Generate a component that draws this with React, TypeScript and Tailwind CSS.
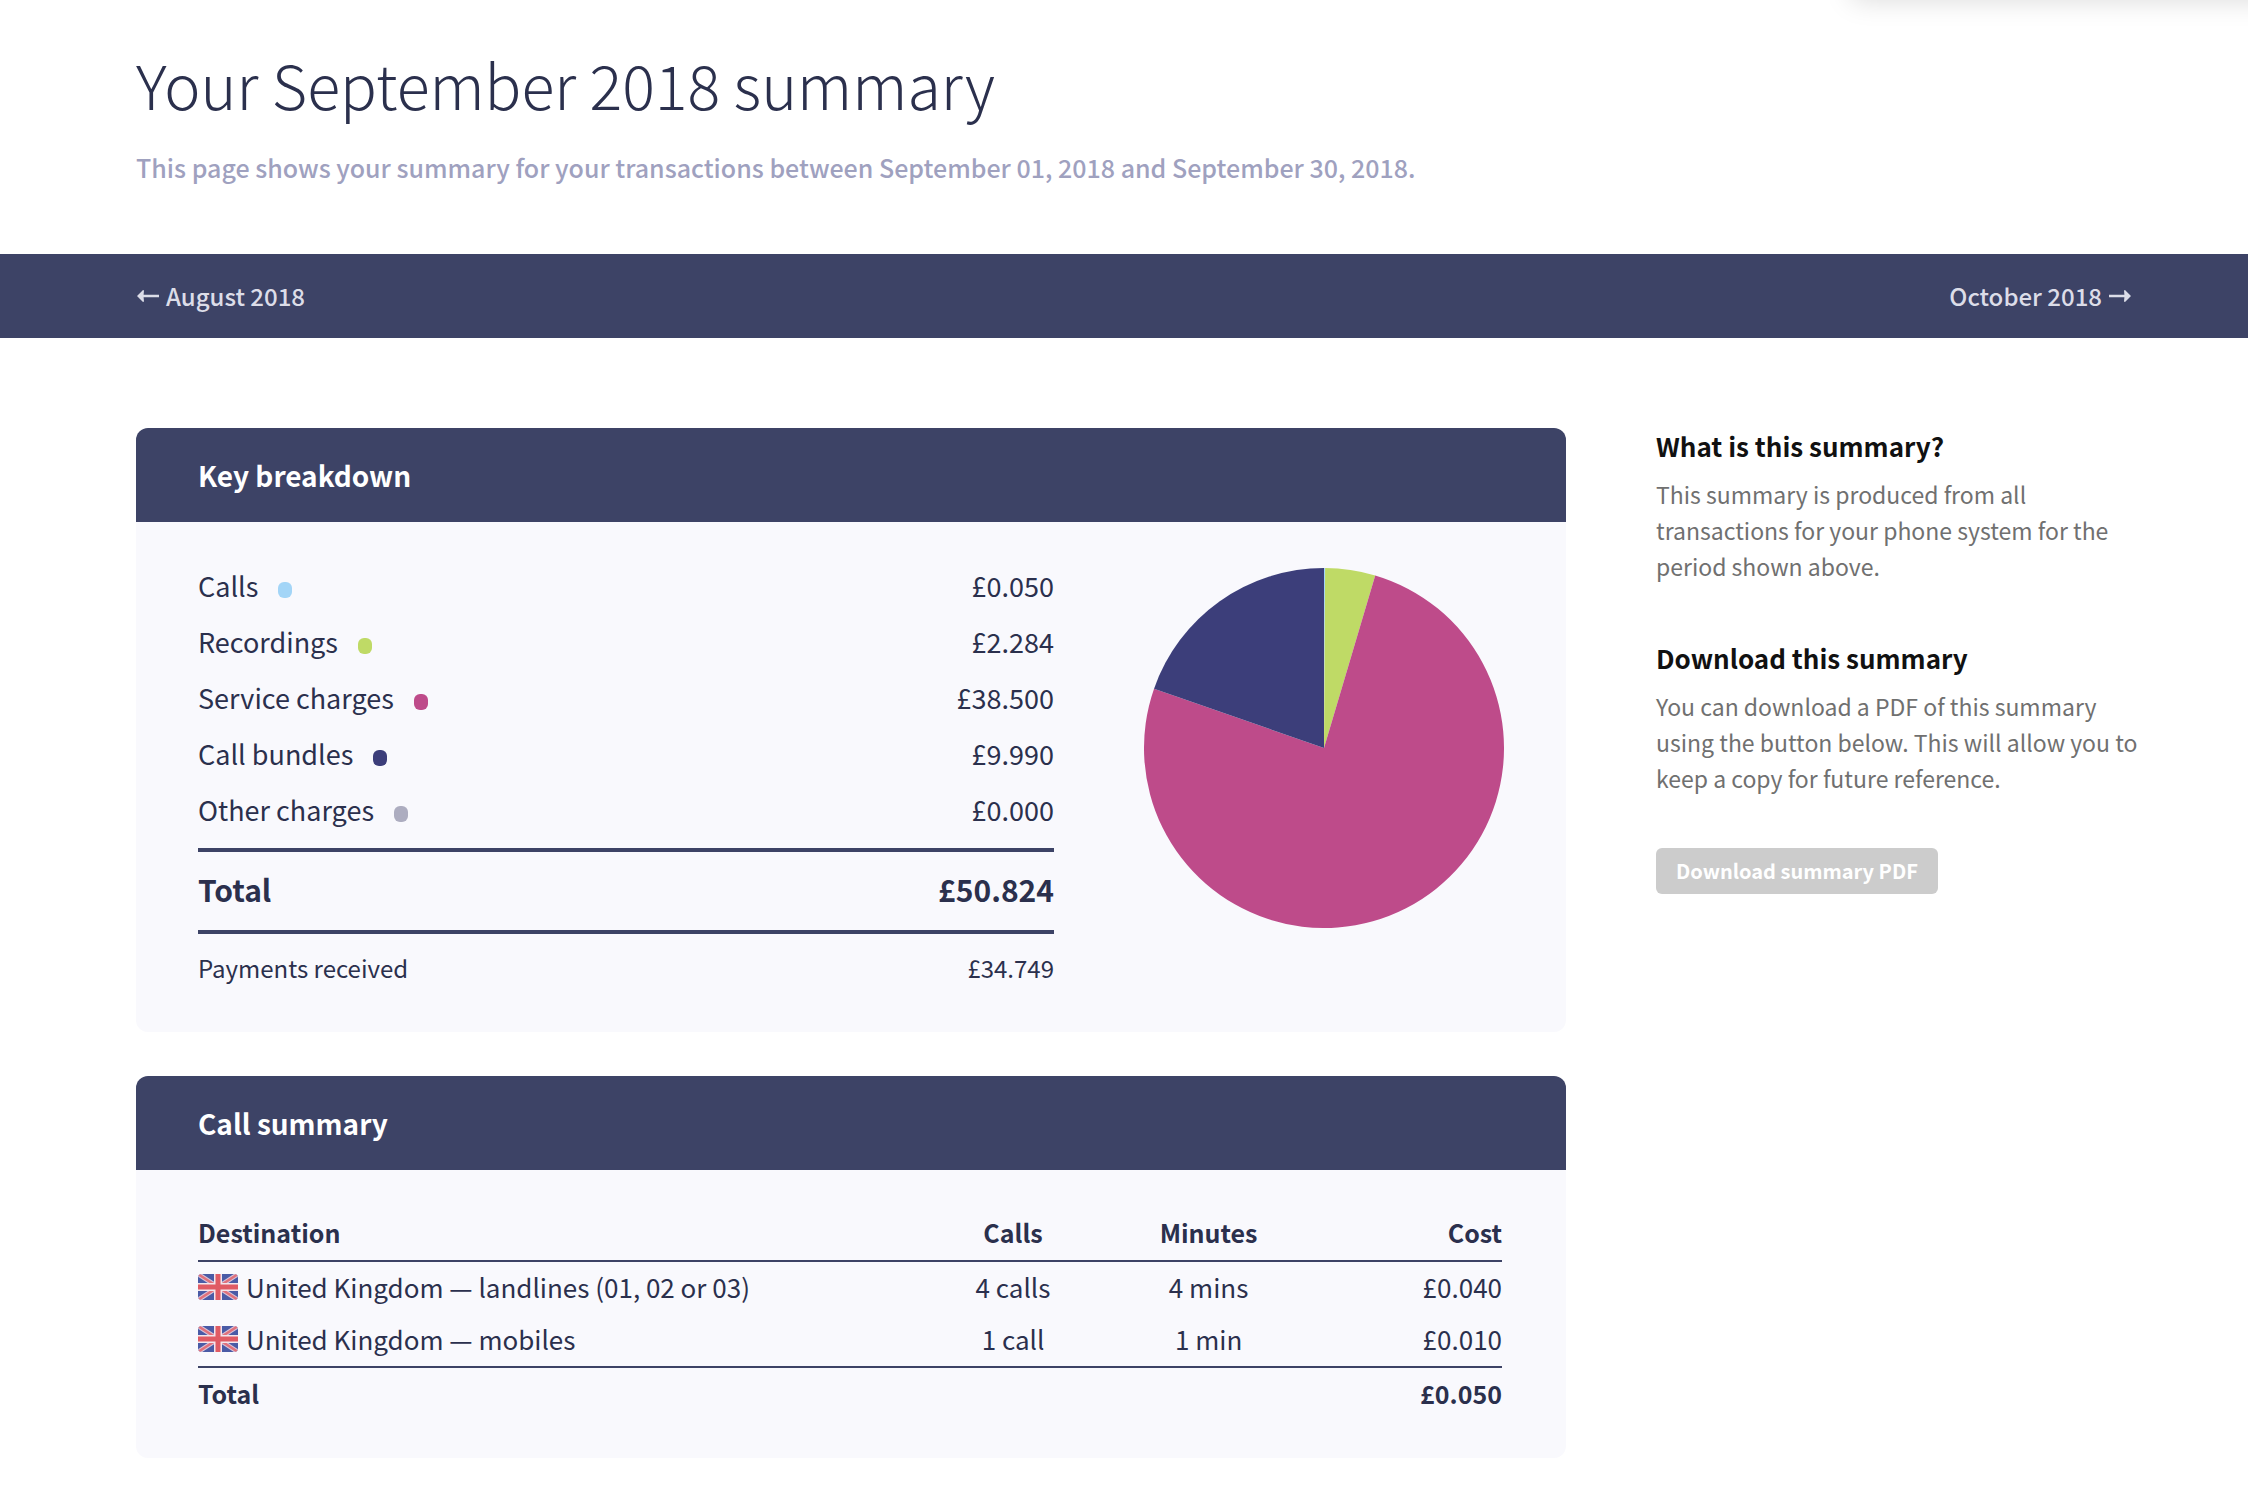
import React from 'react';

type Charge = { label: string; amount: number; dot: string; fill: string };

const CHARGES: Charge[] = [
  { label: 'Calls', amount: 0.05, dot: 'bg-[#a3d5f7]', fill: '#a3d5f7' },
  { label: 'Recordings', amount: 2.284, dot: 'bg-[#bfda66]', fill: '#bfda66' },
  { label: 'Service charges', amount: 38.5, dot: 'bg-[#be4b8a]', fill: '#be4b8a' },
  { label: 'Call bundles', amount: 9.99, dot: 'bg-[#3c3e7a]', fill: '#3c3e7a' },
  { label: 'Other charges', amount: 0, dot: 'bg-[#adadc0]', fill: '#adadc0' },
];

const DESTINATIONS = [
  { name: 'United Kingdom — landlines (01, 02 or 03)', calls: '4 calls', minutes: '4 mins', cost: 0.04 },
  { name: 'United Kingdom — mobiles', calls: '1 call', minutes: '1 min', cost: 0.01 },
];

const money = (n: number) => `£${n.toFixed(3)}`;
const total = CHARGES.reduce((sum, c) => sum + c.amount, 0);

function PieChart() {
  const point = (share: number) => {
    const angle = share * 2 * Math.PI;
    return `${180 + 180 * Math.sin(angle)} ${180 - 180 * Math.cos(angle)}`;
  };
  let used = 0;

  return (
    <svg className="size-[360px] shrink-0" viewBox="0 0 360 360" role="img" aria-label="Charges by type">
      {CHARGES.filter((c) => c.amount > 0).map((c) => {
        const start = used / total;
        used += c.amount;
        const end = used / total;
        return (
          <path
            key={c.label}
            fill={c.fill}
            d={`M180 180 L${point(start)} A180 180 0 ${end - start > 0.5 ? 1 : 0} 1 ${point(end)} Z`}
          />
        );
      })}
    </svg>
  );
}

function Flag() {
  return (
    <svg className="h-[26px] w-10 shrink-0 rounded" viewBox="0 0 40 26" aria-hidden="true">
      <rect width="40" height="26" fill="#4a5ba6" />
      <path d="M0 0L40 26M40 0L0 26" stroke="#d9c3d8" strokeWidth="4.6" />
      <path d="M0 0L40 26M40 0L0 26" stroke="#e0717c" strokeWidth="2.4" />
      <path d="M20 0V26M0 13H40" stroke="#f3e6ec" strokeWidth="8" />
      <path d="M20 0V26M0 13H40" stroke="#e05b64" strokeWidth="5" />
    </svg>
  );
}

function Arrow({ className = '' }: { className?: string }) {
  return (
    <svg className={`h-3 w-6 ${className}`} viewBox="0 0 24 12" fill="currentColor" aria-hidden="true">
      <path d="M1 6L7 0L8 0.6L7.6 4.8H23V7.2H7.6L8 11.4L7 12Z" />
    </svg>
  );
}

function Card({ title, children }: { title: string; children: React.ReactNode }) {
  return (
    <section className="overflow-hidden rounded-xl bg-[#f9f9fd]">
      <h2 className="bg-[#3d4366] px-[62px] py-[27px] text-[28px] leading-10 font-bold text-white">{title}</h2>
      {children}
    </section>
  );
}

export default function App() {
  return (
    <div className="relative min-h-screen overflow-hidden bg-white font-['Noto_Sans_CJK_SC',sans-serif] text-[#2b304d]">
      {/* shadow of the panel above the page */}
      <div className="absolute -right-10 bottom-full h-10 w-[436px] shadow-[0_0_28px_rgba(0,0,0,0.15)]" />

      <header className="pt-11 pr-[116px] pb-[67px] pl-[136px]">
        <h1 className="text-[61px] leading-20 font-light">Your September 2018 summary</h1>
        <p className="mt-[23px] text-[25px] leading-10 font-medium text-[#9fa1bf]">
          This page shows your summary for your transactions between September 01, 2018 and September 30, 2018.
        </p>
      </header>

      <nav className="flex justify-between bg-[#3d4366] py-[22px] pr-[116px] pl-[136px] text-[24px] leading-10 font-medium text-[#dcdde8]">
        <a href="#august" className="flex items-center gap-1.5">
          <Arrow />
          August 2018
        </a>
        <a href="#october" className="flex items-center gap-1.5">
          October 2018
          <Arrow className="rotate-180" />
        </a>
      </nav>

      <div className="flex items-start gap-[90px] pt-[90px] pr-[108px] pb-8 pl-[136px]">
        <main className="flex flex-1 flex-col gap-11">
          <Card title="Key breakdown">
            <div className="flex items-start gap-[90px] px-[62px] py-11">
              <dl className="flex-1 text-[27px] leading-10">
                {CHARGES.map((c) => (
                  <div key={c.label} className="mb-4 flex justify-between">
                    <dt className="flex items-center gap-5">
                      {c.label}
                      <span className={`mt-2 h-4 w-3.5 rounded-md ${c.dot}`} />
                    </dt>
                    <dd>{money(c.amount)}</dd>
                  </div>
                ))}
                <div className="mt-[18px] flex justify-between border-y-4 border-[#3d4366] pt-[17px] pb-[21px] text-[30px] font-bold">
                  <dt>Total</dt>
                  <dd>{money(total)}</dd>
                </div>
                <div className="flex justify-between pt-3.5 text-[24px]">
                  <dt>Payments received</dt>
                  <dd>{money(34.749)}</dd>
                </div>
              </dl>
              <div className="pt-0.5">
                <PieChart />
              </div>
            </div>
          </Card>

          <Card title="Call summary">
            <div className="pt-[42px] pr-16 pb-[45px] pl-[62px]">
              <table className="w-full table-fixed text-[26px] leading-10">
                <thead className="text-[25px]">
                  <tr className="border-b-2 border-[#3d4366]">
                    <th className="w-[55%] pb-2 text-left font-bold">Destination</th>
                    <th className="pb-2 font-bold">Calls</th>
                    <th className="pb-2 font-bold">Minutes</th>
                    <th className="pb-2 text-right font-bold">Cost</th>
                  </tr>
                </thead>
                <tbody>
                  {DESTINATIONS.map((d) => (
                    <tr key={d.name}>
                      <td className="pt-[5px] pb-[7px]">
                        <div className="flex items-center gap-2">
                          <Flag />
                          {d.name}
                        </div>
                      </td>
                      <td className="pt-[5px] pb-[7px] text-center">{d.calls}</td>
                      <td className="pt-[5px] pb-[7px] text-center">{d.minutes}</td>
                      <td className="pt-[5px] pb-[7px] text-right">{money(d.cost)}</td>
                    </tr>
                  ))}
                </tbody>
                <tfoot className="text-[25px]">
                  <tr className="border-t-2 border-[#3d4366] font-bold">
                    <td className="pt-[5px]" colSpan={3}>
                      Total
                    </td>
                    <td className="pt-[5px] text-right">{money(0.05)}</td>
                  </tr>
                </tfoot>
              </table>
            </div>
          </Card>
        </main>

        <aside className="w-[484px] text-[23px] leading-9 text-[#707070]">
          <h3 className="text-[26px] font-bold text-[#111111]">What is this summary?</h3>
          <p className="mt-3">
            This summary is produced from all transactions for your phone system for the period shown above.
          </p>
          <h3 className="mt-14 text-[26px] font-bold text-[#111111]">Download this summary</h3>
          <p className="mt-3">
            You can download a PDF of this summary using the button below. This will allow you to keep a copy for
            future reference.
          </p>
          <button
            type="button"
            className="mt-13 rounded-md bg-[#cccccc] px-5 py-[5px] text-[20px] font-bold text-white"
          >
            Download summary PDF
          </button>
        </aside>
      </div>
    </div>
  );
}
